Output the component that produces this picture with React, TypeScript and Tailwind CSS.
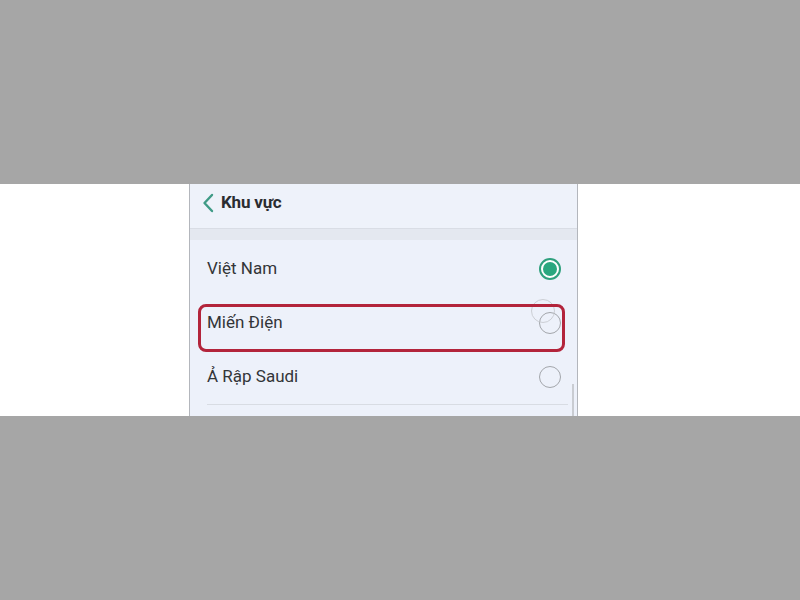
import React from "react";

function Radio({ checked }: { checked?: boolean }) {
  if (checked) {
    return (
      <div className="w-[22px] h-[22px] rounded-full border-2 border-[#2fa07d] flex items-center justify-center bg-white">
        <div className="w-[14px] h-[14px] rounded-full bg-[#2aa77f]" />
      </div>
    );
  }
  return <div className="w-[22px] h-[22px] rounded-full border-[1.5px] border-[#a3a6ab]" />;
}

function Row({ label, checked }: { label: string; checked?: boolean }) {
  return (
    <div className="h-[54px] flex items-center justify-between pl-[17px] pr-[16px]">
      <span className="text-[17px] text-[#333538]">{label}</span>
      <Radio checked={checked} />
    </div>
  );
}

export default function App() {
  return (
    <div
      className="w-[800px] h-[600px] flex flex-col bg-[#a6a6a6]"
      style={{ fontFamily: "Roboto, 'Noto Sans', sans-serif" }}
    >
      <div className="h-[184px] bg-[#a6a6a6]" />
      <div className="h-[232px] flex bg-white">
        <div className="w-[189px] bg-white" />
        <div className="w-[389px] relative bg-[#edf1fa] border-l border-r border-[#b3b6bc] overflow-hidden flex flex-col">
          <div className="h-[44px] flex items-center pl-[12px] pb-[6px] gap-[7px] bg-[#eef2fa]">
            <svg width="12" height="20" viewBox="0 0 12 20" fill="none">
              <path d="M10 2 L2.5 10 L10 18" stroke="#3f9b86" strokeWidth="2.4" strokeLinecap="round" strokeLinejoin="round" />
            </svg>
            <span className="text-[17px] font-bold text-[#2a2c30] tracking-[-0.2px]">Khu vực</span>
          </div>
          <div className="h-[12px] bg-[#e4e8f0] border-t border-[#d9dde5]" />
          <div className="flex flex-col mt-[2px]">
            <Row label="Việt Nam" checked />
            <Row label="Miến Điện" />
            <Row label="Ả Rập Saudi" />
            <div className="ml-[17px] mr-[9px] h-px bg-[#d8dce3]" />
          </div>
          <div className="absolute left-[341px] top-[115px] w-[24px] h-[24px] rounded-full border border-[#c3c6cb] opacity-80" />
          <div className="absolute left-[8px] top-[120px] w-[367px] h-[48px] rounded-[8px] border-[3px] border-[#b3243b]" />
          <div className="absolute left-[382px] top-[200px] w-[2px] h-[40px] bg-[#c9ccd2]" />
        </div>
        <div className="flex-1 bg-white" />
      </div>
      <div className="flex-1 bg-[#a6a6a6]" />
    </div>
  );
}
